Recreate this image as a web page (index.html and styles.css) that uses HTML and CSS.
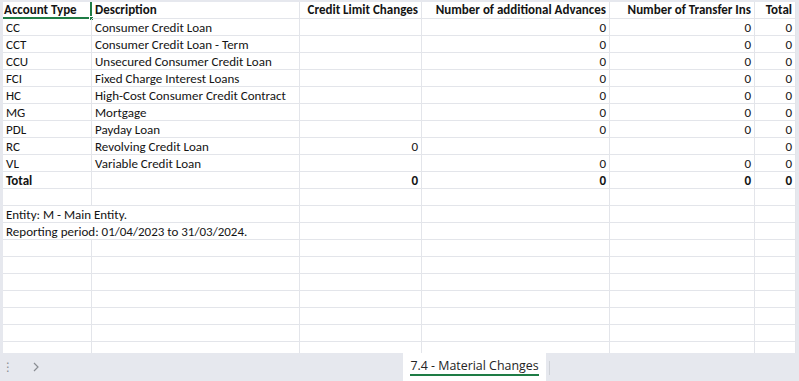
FILE: index.html
```html
<!DOCTYPE html>
<html>
<head>
<meta charset="utf-8">
<link rel="stylesheet" href="styles.css">
</head>
<body>
<div class="app">
  <div class="sheet-area">
    <div class="edge-left"></div>
    <div class="sheet">
      <div class="grid">
        <div class="c hd sel">Account Type<span class="handle"></span></div>
        <div class="c hd">Description</div>
        <div class="c hd r">Credit Limit Changes</div>
        <div class="c hd r">Number of additional Advances</div>
        <div class="c hd r">Number of Transfer Ins</div>
        <div class="c hd r">Total</div>

        <div class="c">CC</div><div class="c">Consumer Credit Loan</div><div class="c r"></div><div class="c r">0</div><div class="c r">0</div><div class="c r">0</div>
        <div class="c">CCT</div><div class="c">Consumer Credit Loan - Term</div><div class="c r"></div><div class="c r">0</div><div class="c r">0</div><div class="c r">0</div>
        <div class="c">CCU</div><div class="c">Unsecured Consumer Credit Loan</div><div class="c r"></div><div class="c r">0</div><div class="c r">0</div><div class="c r">0</div>
        <div class="c">FCI</div><div class="c">Fixed Charge Interest Loans</div><div class="c r"></div><div class="c r">0</div><div class="c r">0</div><div class="c r">0</div>
        <div class="c">HC</div><div class="c">High-Cost Consumer Credit Contract</div><div class="c r"></div><div class="c r">0</div><div class="c r">0</div><div class="c r">0</div>
        <div class="c">MG</div><div class="c">Mortgage</div><div class="c r"></div><div class="c r">0</div><div class="c r">0</div><div class="c r">0</div>
        <div class="c">PDL</div><div class="c">Payday Loan</div><div class="c r"></div><div class="c r">0</div><div class="c r">0</div><div class="c r">0</div>
        <div class="c">RC</div><div class="c">Revolving Credit Loan</div><div class="c r">0</div><div class="c r"></div><div class="c r"></div><div class="c r">0</div>
        <div class="c">VL</div><div class="c">Variable Credit Loan</div><div class="c r"></div><div class="c r">0</div><div class="c r">0</div><div class="c r">0</div>
        <div class="c b">Total</div><div class="c"></div><div class="c r b">0</div><div class="c r b">0</div><div class="c r b">0</div><div class="c r b">0</div>

        <div class="c"></div><div class="c"></div><div class="c"></div><div class="c"></div><div class="c"></div><div class="c"></div>
        <div class="c span2">Entity: M - Main Entity.</div><div class="c"></div><div class="c"></div><div class="c"></div><div class="c"></div>
        <div class="c span2">Reporting period: 01/04/2023 to 31/03/2024.</div><div class="c"></div><div class="c"></div><div class="c"></div><div class="c"></div>

        <div class="c"></div><div class="c"></div><div class="c"></div><div class="c"></div><div class="c"></div><div class="c"></div>
        <div class="c"></div><div class="c"></div><div class="c"></div><div class="c"></div><div class="c"></div><div class="c"></div>
        <div class="c"></div><div class="c"></div><div class="c"></div><div class="c"></div><div class="c"></div><div class="c"></div>
        <div class="c"></div><div class="c"></div><div class="c"></div><div class="c"></div><div class="c"></div><div class="c"></div>
        <div class="c"></div><div class="c"></div><div class="c"></div><div class="c"></div><div class="c"></div><div class="c"></div>
        <div class="c"></div><div class="c"></div><div class="c"></div><div class="c"></div><div class="c"></div><div class="c"></div>
        <div class="c"></div><div class="c"></div><div class="c"></div><div class="c"></div><div class="c"></div><div class="c"></div>
      </div>
    </div>
    <div class="edge-right"></div>
  </div>
  <div class="tabbar">
    <div class="nav">
      <span class="dots">⋮</span>
      <svg class="chev" width="8" height="12" viewBox="0 0 8 12"><path d="M2 2 L6 6 L2 10" fill="none" stroke="#8a8d93" stroke-width="1.2"/></svg>
    </div>
    <div class="tab"><span class="tab-label">7.4 - Material Changes</span></div>
    <div class="tab-sep"></div>
  </div>
</div>
</body>
</html>
```
FILE: styles.css
```css
html, body {
  margin: 0;
  padding: 0;
  background: #ffffff;
}
.app {
  width: 799px;
  height: 381px;
  display: flex;
  flex-direction: column;
  overflow: hidden;
}
.sheet-area {
  height: 353px;
  display: flex;
  overflow: hidden;
}
.edge-left {
  width: 3px;
  background: #e6e8ee;
  flex: none;
}
.edge-right {
  flex: 1;
  background: #e6e8ee;
}
.sheet {
  width: 793px;
  flex: none;
  border-top: 2px solid #e6e8ee;
  overflow: hidden;
}
.grid {
  display: grid;
  grid-template-columns: 89px 208px 122px 188px 145px 41px;
  grid-auto-rows: 17px;
  font-family: "Carlito", "Lato", sans-serif;
  font-size: 13px;
  color: #141414;
}
.c {
  border-right: 1px solid #e3e5ea;
  border-bottom: 1px solid #e3e5ea;
  padding: 1px 3px 0;
  line-height: 16px;
  white-space: nowrap;
  overflow: visible;
  position: relative;
}
.hd { font-weight: bold; padding-top: 0; }
.b { font-weight: bold; }
.r { text-align: right; }
.span2 { grid-column: span 2; }
.sel {
  border-right: 2px solid #1e7c45;
  border-bottom: 2px solid #1e7c45;
  line-height: 15px;
  padding-left: 1px;
}
.handle {
  position: absolute;
  right: -4px;
  bottom: -4px;
  width: 5px;
  height: 5px;
  background: #1e7c45;
  border: 1px solid #ffffff;
  box-sizing: border-box;
}
.tabbar {
  height: 28px;
  background: #e6e8ee;
  display: flex;
  align-items: stretch;
}
.nav {
  width: 403px;
  display: flex;
  align-items: center;
  gap: 18px;
  padding-left: 2px;
  box-sizing: border-box;
}
.dots {
  color: #8a8d93;
  font-family: "DejaVu Sans", sans-serif;
  font-size: 12px;
}
.chev { display: block; }
.tab {
  width: 143px;
  background: #ffffff;
  display: flex;
  align-items: center;
  justify-content: center;
  font-family: "Open Sans", sans-serif;
  font-size: 12.4px;
  color: #242424;
}
.tab-label {
  border-bottom: 2px solid #1e7c45;
  line-height: 15px;
  padding-bottom: 1px;
}
.tab-sep {
  width: 1px;
  background: #cfd2d8;
  margin: 8px 0 6px 3px;
}
```
